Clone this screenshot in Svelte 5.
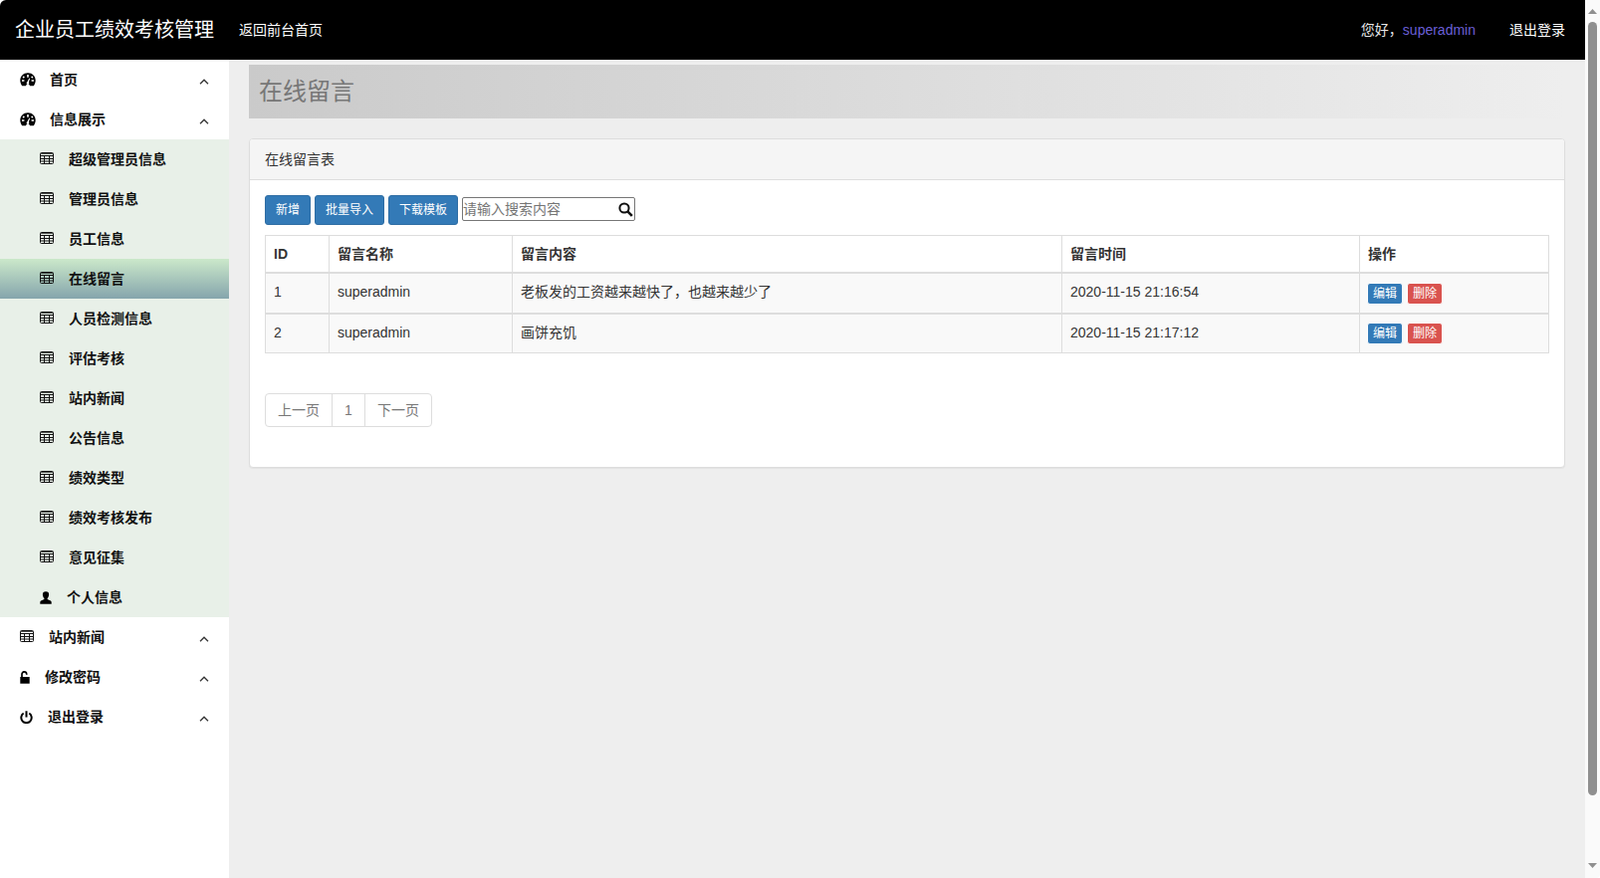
<script>
  const subItems = [
    '超级管理员信息', '管理员信息', '员工信息', '在线留言', '人员检测信息', '评估考核',
    '站内新闻', '公告信息', '绩效类型', '绩效考核发布', '意见征集',
  ];

  const messages = [
    { id: 1, name: 'superadmin', content: '老板发的工资越来越快了，也越来越少了', time: '2020-11-15 21:16:54' },
    { id: 2, name: 'superadmin', content: '画饼充饥', time: '2020-11-15 21:17:12' },
  ];
</script>

{#snippet chevron()}
  <svg class="chevron" viewBox="0 0 10 6" width="10" height="6">
    <path d="M1 5.2 5 1.2 9 5.2" fill="none" stroke="#333" stroke-width="1.3" />
  </svg>
{/snippet}

{#snippet dashboard()}
  <svg class="icon" viewBox="0 0 16 14" width="16" height="14">
    <path fill-rule="evenodd" fill="#000" d="M8 0.300C3.500 0.300 0.300 3.700 0.300 7.800c0 2 0.700 3.800 1.900 5.400h3.700l0.900-1.500h2.400l0.900 1.500h3.700c1.200-1.600 1.900-3.400 1.900-5.400C15.700 3.700 12.500 0.300 8 0.300zM7.200 2h1.600v2.800H7.200zM3.700 3.300l1.200 0.900-1.100 1.500-1.200-1zM12.300 3.300l1.100 1.400-1.200 1-1.100-1.500zM2 7.200h2.400v1.500H2zM11.600 7.200H14v1.500h-2.400zM9.300 5.500l0.800 0.400-1.200 3.600a1.300 1.300 0 1 1-1.500-0.300z" />
  </svg>
{/snippet}

{#snippet grid()}
  <svg class="icon grid" viewBox="0 0 14 12" width="14" height="12">
    <rect x="0.500" y="0.500" width="13" height="11" rx="1" fill="none" stroke="#111" />
    <path fill="none" stroke="#111" d="M0.500 3.500h13M0.500 6.500h13M0.500 9h13M4.500 3.500v8M9.500 3.500v8" />
    <path fill="none" stroke="#111" stroke-width="0.700" d="M1 1.500h12" />
  </svg>
{/snippet}

<div class="app">
  <div class="page">
    <header class="topbar">
      <div class="brand">企业员工绩效考核管理</div>
      <a class="home-link" href="#home">返回前台首页</a>
      <div class="user">您好，<span class="user-name">superadmin</span></div>
      <a class="logout" href="#logout">退出登录</a>
    </header>

    <div class="body">
      <nav class="sidebar">
        <div class="row">
          {@render dashboard()}
          <span class="label l-dash">首页</span>
          {@render chevron()}
        </div>
        <div class="row">
          {@render dashboard()}
          <span class="label l-dash">信息展示</span>
          {@render chevron()}
        </div>
        <div class="submenu">
          {#each subItems as item}
            <div class="row sub" class:active={item === '在线留言'}>
              {@render grid()}
              <span class="label l-grid">{item}</span>
            </div>
          {/each}
          <div class="row sub">
            <svg class="icon" viewBox="0 0 12 13" width="12" height="13">
              <path fill="#000" d="M6 0.300a3.100 3.100 0 0 1 3.100 3.300c0 1.500-0.800 2.900-1.500 3.500v1l2.700 1.200c0.900 0.400 1.400 1 1.400 1.900v1.600H0.300v-1.600c0-0.900 0.500-1.500 1.400-1.900l2.700-1.200v-1C3.700 6.500 2.900 5.100 2.900 3.600A3.100 3.100 0 0 1 6 0.300z" />
            </svg>
            <span class="label l-user">个人信息</span>
          </div>
        </div>
        <div class="row">
          {@render grid()}
          <span class="label l-news">站内新闻</span>
          {@render chevron()}
        </div>
        <div class="row">
          <svg class="icon" viewBox="0 0 10 13" width="10" height="13">
            <path fill="#000" d="M0.300 6h9.400v6.700H0.300z" />
            <path fill="none" stroke="#000" stroke-width="1.700" d="M2 6.500V3.200a2.400 2.400 0 0 1 4.800 0v0.600" />
          </svg>
          <span class="label l-lock">修改密码</span>
          {@render chevron()}
        </div>
        <div class="row">
          <svg class="icon" viewBox="0 0 13 13" width="13" height="13">
            <path fill="none" stroke="#000" stroke-width="2" d="M3.700 2.500a5.200 5.200 0 1 0 5.600 0M6.500 0.200v6.200" />
          </svg>
          <span class="label l-off">退出登录</span>
          {@render chevron()}
        </div>
      </nav>

      <main class="content">
        <h1 class="page-title">在线留言</h1>

        <section class="panel">
          <div class="panel-head">在线留言表</div>
          <div class="panel-body">
            <div class="toolbar">
              <button class="btn blue">新增</button>
              <button class="btn blue">批量导入</button>
              <button class="btn blue">下载模板</button>
              <div class="search">
                <input type="text" placeholder="请输入搜索内容" />
                <svg viewBox="0 0 15 15" width="15" height="15">
                  <circle cx="6" cy="6" r="4.600" fill="none" stroke="#111" stroke-width="2" />
                  <path d="M9.400 9.400 13.800 13.800" stroke="#111" stroke-width="2.600" />
                </svg>
              </div>
            </div>

            <table>
              <colgroup>
                <col style="width: 64px" />
                <col style="width: 184px" />
                <col style="width: 552px" />
                <col style="width: 299px" />
                <col />
              </colgroup>
              <thead>
                <tr>
                  <th>ID</th>
                  <th>留言名称</th>
                  <th>留言内容</th>
                  <th>留言时间</th>
                  <th>操作</th>
                </tr>
              </thead>
              <tbody>
                {#each messages as msg}
                  <tr>
                    <td>{msg.id}</td>
                    <td>{msg.name}</td>
                    <td>{msg.content}</td>
                    <td>{msg.time}</td>
                    <td class="actions">
                      <button class="btn-xs blue">编辑</button>
                      <button class="btn-xs red">删除</button>
                    </td>
                  </tr>
                {/each}
              </tbody>
            </table>

            <div class="pager">
              <span class="prev">上一页</span>
              <span class="num">1</span>
              <span class="next">下一页</span>
            </div>
          </div>
        </section>
      </main>
    </div>
  </div>

  <div class="scrollbar">
    <svg viewBox="0 0 9 5" width="9" height="5"><path d="M0 5 4.500 0 9 5z" fill="#8f8f8f" /></svg>
    <div class="thumb"></div>
    <svg viewBox="0 0 9 5" width="9" height="5"><path d="M0 0 4.500 5 9 0z" fill="#8f8f8f" /></svg>
  </div>
</div>

<style>
  :global(body) {
    margin: 0;
    background: #fff;
    overflow: hidden;
  }

  .app {
    display: flex;
    height: 882px;
    font-family: "Liberation Sans", "Noto Sans CJK SC", sans-serif;
    font-size: 14px;
    line-height: 20px;
    color: #333;
  }

  .page {
    flex: 1;
    min-width: 0;
    display: flex;
    flex-direction: column;
  }

  /* top bar */
  .topbar {
    height: 60px;
    flex-shrink: 0;
    display: flex;
    align-items: center;
    background: #000;
    color: #fff;
    padding: 0 20px 0 15px;
    border-top-left-radius: 6px;
  }
  .brand { font-size: 20px; width: 225px; }
  .home-link { color: #fff; text-decoration: none; }
  .user { margin-left: auto; margin-right: 34px; color: #e6e6e6; }
  .user-name { color: #6a5fd6; }
  .logout { color: #fff; text-decoration: none; }

  .body { flex: 1; display: flex; min-height: 0; }

  /* sidebar */
  .sidebar { width: 230px; flex-shrink: 0; background: #fff; }
  .row {
    height: 40px;
    display: flex;
    align-items: center;
    padding-left: 20px;
    color: #111;
    font-weight: 700;
  }
  .row .chevron { margin-left: auto; margin-right: 20px; margin-top: 4px; }
  .icon { flex-shrink: 0; }
  .grid { margin-top: -2px; }
  .submenu { background: #e8f0e8; }
  .row.sub { padding-left: 40px; }
  .row.active { background: linear-gradient(to bottom, #cbe8ca, #85a5ac); }
  .l-dash { margin-left: 14px; }
  .l-grid { margin-left: 15px; }
  .l-user { margin-left: 15px; }
  .l-news { margin-left: 15px; }
  .l-lock { margin-left: 15px; }
  .l-off { margin-left: 15px; }

  /* content */
  .content { flex: 1; min-width: 0; background: #eee; padding: 5px 20px 0; }
  .page-title {
    height: 54px;
    margin: 0 0 20px;
    padding-left: 10px;
    font-size: 24px;
    font-weight: 400;
    line-height: 54px;
    color: #777;
    background: linear-gradient(to right, #cacaca, #eee);
  }

  .panel {
    background: #fff;
    border: 1px solid #ddd;
    border-radius: 4px;
    box-shadow: 0 1px 1px rgba(0, 0, 0, 0.05);
  }
  .panel-head {
    height: 41px;
    line-height: 40px;
    padding-left: 15px;
    box-sizing: border-box;
    background: #f5f5f5;
    border-bottom: 1px solid #ddd;
    border-radius: 3px 3px 0 0;
  }
  .panel-body { padding: 15px 15px 40px; }

  .toolbar { display: flex; align-items: center; gap: 4px; margin-bottom: 10px; }
  .btn {
    height: 30px;
    padding: 0 10px;
    font: inherit;
    font-size: 12px;
    color: #fff;
    border-radius: 3px;
    border: 1px solid #2e6da4;
  }
  .blue { background: #337ab7; border-color: #2e6da4; }
  .red { background: #d9534f; border-color: #d43f3a; }

  .search {
    width: 174px;
    height: 24px;
    box-sizing: border-box;
    display: flex;
    align-items: center;
    border: 1px solid #767676;
    border-radius: 2px;
    padding-right: 1px;
    margin-bottom: 2px;
  }
  .search input {
    flex: 1;
    min-width: 0;
    border: 0;
    outline: 0;
    padding: 0;
    font: inherit;
    background: transparent;
  }
  .search input::placeholder { color: #757575; }

  table {
    width: 100%;
    table-layout: fixed;
    border-collapse: collapse;
    border: 1px solid #ddd;
  }
  th, td {
    border: 1px solid #ddd;
    padding: 8px;
    text-align: left;
  }
  th { border-bottom-width: 2px; height: 20px; }
  td { height: 22px; background: #f9f9f9; vertical-align: top; }
  tbody tr:first-child td { border-bottom-width: 2px; height: 23px; }
  .actions { padding: 8px 7px 0; }
  tbody tr:first-child .actions { padding-top: 9px; }
  .btn-xs {
    display: inline-block;
    height: 22px;
    width: 36px;
    padding: 0;
    font: inherit;
    font-size: 12px;
    line-height: 18px;
    color: #fff;
    border-radius: 3px;
    border: 1px solid;
    vertical-align: top;
  }

  .pager {
    display: inline-flex;
    margin-top: 40px;
    height: 34px;
    box-sizing: border-box;
    border: 1px solid #ddd;
    border-radius: 4px;
    color: #777;
    background: #fff;
  }
  .pager span { display: flex; align-items: center; justify-content: center; box-sizing: border-box; }
  .prev { width: 66px; }
  .num { width: 34px; border-left: 1px solid #ddd; border-right: 1px solid #ddd; }
  .next { width: 66px; }

  /* page scrollbar */
  .scrollbar {
    width: 15px;
    flex-shrink: 0;
    background: #fafafa;
    display: flex;
    flex-direction: column;
    align-items: center;
    padding: 9px 0 10px;
    box-sizing: border-box;
    gap: 8px;
    border-bottom-right-radius: 4px;
  }
  .thumb { flex: 1; width: 9px; background: #8f8f8f; border-radius: 5px; margin-bottom: 60px; }
</style>
